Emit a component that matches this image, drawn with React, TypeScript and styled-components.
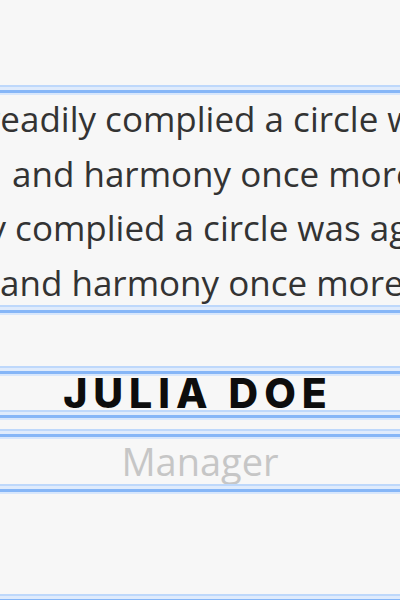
import React from "react";
import styled, { createGlobalStyle } from "styled-components";

const Global = createGlobalStyle`
  html, body {
    margin: 0;
    padding: 0;
    background: #f7f7f7;
    overflow: hidden;
  }
  #root {
    width: 400px;
    height: 600px;
  }
`;

const Page = styled.div`
  width: 400px;
  height: 600px;
  display: flex;
  flex-direction: column;
  background: #f7f7f7;
  overflow: hidden;
`;

const Spacer = styled.div<{ $h: number }>`
  height: ${(p) => p.$h}px;
  flex: none;
`;

const Guide = styled.div`
  height: 10px;
  flex: none;
  background: linear-gradient(
    to bottom,
    #bed8fb 0px,
    #bed8fb 2px,
    #dfebfc 2px,
    #dfebfc 5px,
    #86b6f7 5px,
    #86b6f7 8px,
    #d8e7fc 8px,
    #d8e7fc 10px
  );
`;

const Quote = styled.div`
  height: 210px;
  flex: none;
  display: flex;
  flex-direction: column;
  overflow: visible;
`;

const QuoteLines = styled.div`
  margin-top: -3px;
  display: flex;
  flex-direction: column;
`;

const QuoteLine = styled.div<{ $indent: number }>`
  font-family: "Open Sans", "Liberation Sans", sans-serif;
  font-size: 35px;
  line-height: 54.5px;
  color: #333333;
  white-space: nowrap;
  overflow: hidden;
  text-indent: ${(p) => p.$indent}px;
`;

const NameBox = styled.div`
  height: 34px;
  flex: none;
  display: flex;
  justify-content: center;
  padding-right: 4px;
`;

const Name = styled.div`
  font-family: "Inter", "DejaVu Sans", sans-serif;
  font-weight: 800;
  font-size: 41px;
  line-height: 34px;
  letter-spacing: 6px;
  color: #0d0d0d;
  white-space: nowrap;
`;

const RoleBox = styled.div`
  height: 45px;
  flex: none;
  display: flex;
  justify-content: center;
`;

const Role = styled.div`
  font-family: "Open Sans", "Liberation Sans", sans-serif;
  font-size: 38px;
  line-height: 45px;
  color: #c6c6c6;
  white-space: nowrap;
`;

const lines: { text: string; indent: number }[] = [
  { text: "readily complied a circle was again formed,", indent: -14 },
  { text: "and harmony once more prevailed.", indent: 12 },
  { text: "readily complied a circle was again formed,", indent: -104 },
  { text: "and harmony once more prevailed.", indent: 0 },
];

export default function App() {
  return (
    <Page>
      <Global />
      <Spacer $h={85} />
      <Guide />
      <Quote>
        <QuoteLines>
          {lines.map((l, i) => (
            <QuoteLine key={i} $indent={l.indent}>
              {l.text}
            </QuoteLine>
          ))}
        </QuoteLines>
      </Quote>
      <Guide />
      <Spacer $h={51} />
      <Guide />
      <NameBox>
        <Name>JULIA DOE</Name>
      </NameBox>
      <Guide />
      <Spacer $h={9} />
      <Guide />
      <RoleBox>
        <Role>Manager</Role>
      </RoleBox>
      <Guide />
      <Spacer $h={100} />
      <Guide />
    </Page>
  );
}
